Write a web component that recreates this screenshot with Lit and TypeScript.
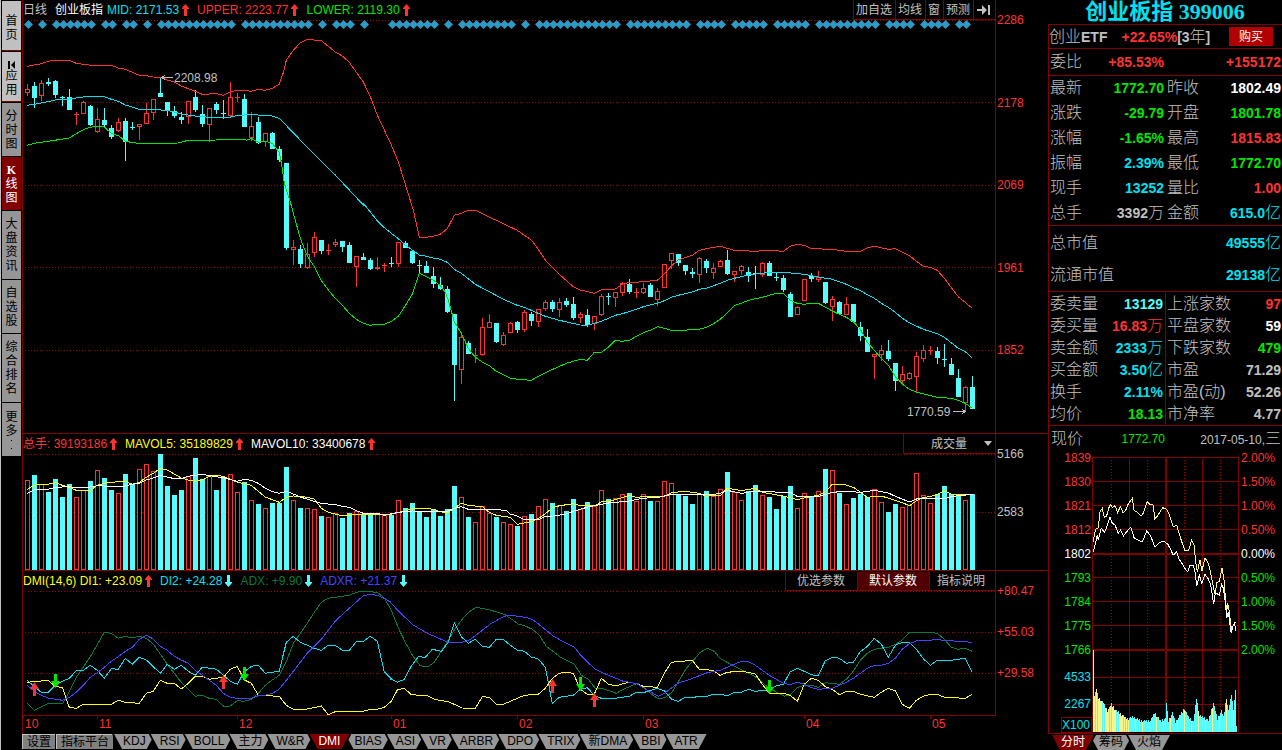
import { LitElement, html, svg, css, nothing } from "lit";
import { customElement, property, state } from "lit/decorators.js";
import { classMap } from "lit/directives/class-map.js";

/* ---------- market data ---------- */

// One entry per trading day: direction, high, body top, body bottom, low (chart units).
const DAYS = `r84,89,93,96 c82,86,98,108 r80,83,96,101 c78,82,84,86 c80,81,95,98 c96,97,98,106 c89,97,110,110
r112,114,115,125 r101,102,114,114 c105,106,125,126 r108,119,132,133 c108,120,125,127 c125,128,137,139 r118,122,131,132
c118,121,142,161 c122,127,128,130 r124,124,127,140 r103,113,124,124 r99,99,113,120 c78,93,97,97 c102,102,111,116
c106,111,116,118 c112,117,120,124 r101,101,117,124 c90,97,110,112 c105,114,124,127 r108,108,125,142 c102,104,110,114
c100,113,114,119 r82,97,116,118 r93,97,98,102 c94,99,127,127 r112,126,138,141 c117,122,143,144 r133,133,142,147
c132,133,149,149 c146,149,160,162 c163,163,248,250 r240,247,250,265 c245,249,264,268 r243,254,268,269 r232,237,253,257
c240,240,251,254 r244,250,251,255 r239,242,245,247 c241,241,247,252 c242,245,263,263 r256,256,267,287 c253,257,260,260
c258,260,269,270 r257,267,269,270 r263,265,266,272 c257,263,264,267 r242,242,264,267 c241,243,248,248 c250,251,263,264
c260,265,266,273 c261,266,273,273 c267,276,284,288 c277,285,289,290 c286,289,312,313 c314,314,365,401 r332,337,370,384
c341,343,354,354 r348,355,356,363 r318,327,355,356 r314,322,328,328 c323,323,342,343 r332,335,345,346 r322,323,333,333
c321,322,330,333 r310,312,330,332 c312,314,321,326 r309,309,322,327 r300,302,309,311 c300,302,309,312 r298,302,310,317
c298,301,305,307 c297,304,318,320 r312,314,318,323 c309,315,325,327 r316,316,324,330 r294,296,315,316 c293,296,297,305
r292,292,298,307 r282,283,293,296 c279,284,292,294 r288,292,293,298 r283,288,293,294 c283,285,297,297 r288,291,300,306
r264,264,288,288 r253,253,261,269 c254,254,263,266 c265,265,271,275 c268,272,274,278 r257,258,275,283 c259,261,268,273
r263,268,273,279 r260,261,267,267 c250,260,274,275 r271,271,275,282 r265,266,271,275 c267,272,276,282 c266,273,274,289
r262,263,275,277 c261,263,276,276 c273,277,278,281 c275,278,290,292 c292,294,317,317 r306,307,315,315 r279,279,301,301
c273,276,279,282 r271,277,280,282 c282,282,303,304 r296,299,307,321 c301,302,314,314 r297,304,315,315 c304,304,322,322
c322,327,336,341 c329,337,352,352 r354,354,357,379 r345,350,355,361 c340,351,359,361 c363,363,381,391 r366,374,381,383
r372,373,379,380 r352,356,377,392 r345,350,359,362 r346,350,351,355 c347,351,358,364 c344,359,360,367 c358,364,375,375
c369,378,397,397 r386,387,403,411 c376,387,409,409`
  .split(/\s+/)
  .map((d) => ({ up: d[0] === "r", v: d.slice(1).split(",").map(Number) }));

const VOLUME_TOPS = [
  480, 475, 484, 492, 479, 497, 484, 497, 490, 481, 470, 478, 490, 493, 474, 484, 469, 464, 471, 453, 486, 495, 490, 476,
  458, 479, 476, 490, 478, 474, 492, 482, 500, 504, 508, 503, 503, 467, 500, 508, 508, 509, 516, 517, 513, 518, 513, 511,
  514, 514, 513, 515, 515, 500, 508, 503, 512, 517, 509, 516, 509, 486, 497, 517, 522, 506, 513, 517, 522, 524, 526, 516,
  514, 506, 499, 503, 505, 511, 499, 509, 502, 506, 490, 499, 498, 494, 493, 501, 494, 501, 501, 481, 483, 494, 496, 504,
  494, 491, 496, 489, 472, 492, 500, 491, 485, 495, 497, 509, 496, 486, 508, 493, 496, 491, 469, 470, 493, 504, 498, 494,
  497, 489, 502, 512, 504, 507, 505, 473, 495, 503, 494, 486, 494, 495, 500, 494,
];

const dayX = (i: number) => 27 + 7 * i;

// A block of curve samples: origin, samples per chart unit, then x,y pairs.
type Block = [number, number, number, string];
const curve = (...blocks: Block[]) =>
  blocks
    .flatMap(([ox, oy, k, pts]) =>
      pts.trim().split(/\s+/).map((p) => {
        const [x, y] = p.split(",").map(Number);
        return `${(ox + x / k).toFixed(1)},${(oy + y / k).toFixed(1)}`;
      })
    )
    .join(" ");

const UPPER = curve(
  [0, 0, 3, "82,199 103,195 124,191 145,184 166,181 208,181 229,190 250,193 292,198 334,196 355,204 376,208 418,226 439,227 460,231 481,232 502,240 523,246 544,258 586,274 607,283 649,281 670,286 691,276 712,271 733,271 754,274 775,268 796,271 817,265 838,253 850,218 859,181 880,151 901,128 922,118 964,122 1006,156 1027,168 1048,187 1090,246 1111,290 1132,345 1174,435 1195,485 1216,553 1240,630 1253,690"],
  [240, 20, 3, "538,652 559,652 580,649 601,643 622,626 643,586 664,580 685,571 706,571 748,592 769,601 832,631 874,660 895,688 916,720 958,763 1000,800 1021,810 1063,820 1084,810 1126,807 1147,793 1168,787"],
  [620, 220, 3, "28,188 49,187 112,181 133,162 154,138 175,120 217,106 238,91 259,86 301,79 343,91 406,94 448,91 490,94 511,79 532,73 553,76 574,86 637,88 679,94 721,94 742,84 763,79 805,88 826,86 868,107 910,139 931,142 952,151 973,175 1015,230 1057,265"]
);
const MID = curve(
  [0, 0, 3, "82,316 103,313 124,309 166,300 208,297 250,291 271,289 313,290 334,298 355,304 376,315 397,321 418,328 439,328 502,331 523,336 544,342 586,348 628,352 691,352 712,346 754,344 796,346 817,348 838,355 922,442 1006,525 1090,615"],
  [240, 20, 3, "370,550 412,602 433,623 475,656 496,675 517,690 538,705 559,709 580,714 601,718 622,727 643,748 664,760 706,793 748,815 790,838 832,856 853,862 874,871 916,889 958,901 1021,915 1042,916 1084,904 1126,886"],
  [620, 220, 3, "7,281 49,268 70,260 112,250 133,242 154,232 175,226 217,216 238,208 259,205 301,190 322,181 343,175 385,165 427,160 448,157 490,157 553,163 595,171 637,178 679,193 721,212 763,235 784,250 805,262 826,277 847,295 868,308 910,328 952,341 973,352 1015,385 1036,395 1057,414"]
);
const LOWER = curve(
  [0, 0, 3, "82,436 103,430 124,427 145,424 208,414 229,401 250,389 271,382 292,379 313,381 334,400 355,407 376,423 397,428 439,432 460,430 533,429 565,421 649,420 733,418 740,421 754,415 775,427 796,424 817,430 838,458 845,495 853,550 872,610"],
  [240, 20, 3, "160,580 181,655 202,708 223,740 244,782 265,810 286,835 307,856 328,880 349,898 370,910 391,916 412,913 433,913 454,904 475,889 496,857 517,822 538,760 559,770 580,780 601,797 615,815 624,838 643,905 664,940 685,985 706,1012 727,1026 748,1037 769,1054 790,1064 811,1074 832,1078 874,1081 895,1069 916,1058 979,1030 1021,1018 1042,1021 1063,997 1084,997 1105,982 1126,961"],
  [620, 220, 3, "7,364 28,361 70,338 91,331 112,320 133,325 154,331 196,331 217,328 238,328 259,322 280,311 301,298 322,278 343,257 364,250 385,241 427,232 448,226 469,220 490,220 511,241 532,250 553,253 574,250 595,250 637,273 658,283 679,292 700,305 721,328 742,367 763,391 784,415 805,435 826,470 847,492 868,508 889,516 952,532 994,535 1015,541 1036,550 1057,565"]
);
const MAVOL5 = curve(
  [0, 430, 3, "82,178 103,166 124,163 145,163 166,157 187,166 208,172 229,181 271,181 292,166 313,160 334,157 376,154 397,163 418,157 439,142 460,130 481,115 502,120 544,144 565,150 586,154 607,149 628,139 649,136 670,139 712,157 733,161 754,166 775,184 796,201 838,217 859,202 880,198 901,199 922,202 943,207 964,235 985,247 1027,257 1048,256 1090,252 1132,253 1174,253 1195,247 1216,244 1237,235 1279,235 1300,238 1321,245 1342,249 1363,235 1384,220 1405,226 1447,230 1468,247 1489,256 1530,262"],
  [510, 430, 2.904, "22,274 41,270 62,266 82,257 103,243 123,226 143,220 184,214 204,220 245,220 265,209 286,208 347,190 367,196 387,193 420,193 448,193 468,182 509,178 550,184 570,192 611,190 631,169 672,176 712,169 733,181 794,192 834,202 875,193 896,190 916,180 936,157 957,157 977,160 998,167 1018,181 1038,196 1059,192 1079,192 1140,211 1160,220 1181,205 1201,196 1221,193 1241,187 1262,176 1282,187 1343,187"]
);
const MAVOL10 = curve(
  [0, 430, 3, "82,190 103,179 145,178 166,172 208,170 229,173 271,171 292,167 334,169 376,168 397,163 418,160 439,150 460,144 481,136 502,141 523,146 544,146 565,139 607,133 649,140 670,143 712,154 733,148 754,151 775,160 796,175 817,185 838,190 859,184 880,192 901,201 943,214 964,220 1006,224 1027,229 1048,232 1069,242 1090,250 1132,250 1153,256 1195,247 1237,243 1300,244 1342,244 1363,235 1384,230 1405,238 1489,238 1520,243"],
  [510, 430, 2.904, "0,244 22,250 41,260 82,261 103,250 123,250 143,247 163,244 184,236 225,224 286,212 340,207 387,198 430,196 468,187 509,187 550,188 590,187 611,184 631,175 672,184 712,177 753,177 774,181 814,181 834,193 896,193 936,181 977,178 1018,181 1059,175 1099,183 1120,193 1160,209 1181,200 1262,200 1282,193 1343,187"]
);
const ADX = curve(
  [0, 570, 3, "82,400 103,421 145,400 187,402 200,380 229,322 271,260 313,187 334,190 355,205 376,199 397,204 418,199 439,205 460,222 502,283 544,337 586,379 607,376 628,385 649,388 670,408 691,408 712,392 733,394 754,388 775,370 796,346 817,330 838,316 859,275 880,220 901,190 922,160 943,127 964,97 985,85 1048,76 1069,67 1090,64 1132,67 1153,84 1174,121"],
  [390, 580, 3, "7,100 28,150 49,193 70,230 91,257 112,261 133,247 154,214 175,180 196,145 217,117 238,95 259,82 301,90 343,103 364,117 385,132 406,138 427,148 448,165 469,199 511,231 553,252 574,286 595,298 616,325 637,325 679,340 700,328 742,310 763,322 784,343 805,356 826,353 847,335 868,300 889,265 931,217 952,205 973,214"],
  [720, 570, 3, "0,265 43,289 106,320 148,355 193,379 211,374 232,353 253,346 274,346 295,352 316,338 358,343 379,328 400,304 421,271 442,250 463,238 505,232 526,223 547,210 568,187 631,187 652,190 673,208 694,232 715,238 736,235 757,244"]
);
const DI2 = curve(
  [0, 570, 3, "82,331 103,350 124,367 145,367 166,346 187,334 208,325 229,302 250,301 271,286 292,301 313,325 334,296 355,298 376,265 397,283 418,262 439,270 460,290 481,310 502,283 523,298 544,286 565,304 586,316 607,291 649,298 670,315 691,334 712,343 733,305 754,289 775,286 796,310 838,304 847,265 859,217 880,199 901,217 943,235 964,241 985,226 1006,226 1027,241 1048,241 1069,215 1090,214 1111,199 1132,214 1153,306 1174,326"],
  [390, 580, 3, "0,296 22,307 43,298 64,258 85,230 106,232 127,208 154,214 175,186 193,128 214,170 235,190 256,178 277,199 298,202 319,178 340,178 361,196 382,210 403,214 424,231 445,237 466,262 487,370 508,352 550,346 571,328 592,323 613,346 634,355 676,355 718,349 739,337 760,338 802,325 823,332 844,357 865,364 886,352 949,350 970,343"],
  [720, 570, 3, "0,373 22,377 43,367 64,367 85,358 106,364 148,360 169,347 190,343 211,305 232,295 253,304 274,314 295,317 316,272 340,261 358,265 379,280 400,277 421,245 442,229 463,205 484,223 505,262 526,226 547,217 568,217 589,238 610,266 631,286 652,271 694,271 736,265 757,307"]
);
const DI1 = curve(
  [0, 570, 3, "82,337 145,331 166,350 187,352 208,412 229,415 250,403 334,403 355,391 376,397 418,400 439,370 460,364 481,331 502,340 523,340 544,357 565,340 586,319 607,319 628,328 670,322 691,298 712,289 733,330 754,340 775,376 838,379 859,406 880,418 922,417 964,408 985,434 1006,425 1090,424 1111,418 1132,418 1153,412 1174,394"],
  [390, 580, 3, "22,330 43,325 64,344 112,347 133,358 175,365 217,384 256,385 277,350 298,352 319,373 340,373 382,355 403,346 445,343 466,325 487,295 508,280 529,277 550,280 571,328 592,343 613,342 634,295 655,312 676,318 697,312 718,307 739,311 760,319 802,322 823,280 844,247 907,241 928,268 970,271"],
  [720, 570, 3, "0,316 22,307 64,303 106,312 127,343 148,370 190,370 211,376 232,394 253,343 274,325 295,331 316,350 337,358 358,374 379,364 400,364 421,373 463,382 484,367 505,355 526,362 547,403 568,415 589,391 610,379 631,373 652,373 673,382 736,385 757,373"]
);
const ADXR = curve(
  [0, 570, 3, "82,346 103,364 124,376 145,384 187,391 208,382 229,367 250,346 271,322 292,308 313,292 334,274 355,260 376,244 397,232 418,208 439,196 460,207 481,229 502,241 523,259 544,270 565,280 586,301 607,316 649,346 670,370 691,382 712,385 754,385 775,377 796,376 817,370 838,357 859,331 880,304 922,250 964,208 1006,153 1048,115 1090,77 1111,73 1132,76 1153,85 1174,98"],
  [390, 580, 3, "0,65 28,96 70,135 112,160 133,169 175,187 217,187 238,180 259,165 301,132 343,109 364,106 406,112 427,118 448,134 490,168 511,180 553,201 574,228 595,248 616,268 637,278 700,304 721,307 742,312 763,325 805,349 826,338 868,307 889,302 952,278"],
  [720, 570, 3, "0,301 43,283 64,274 85,275 106,286 148,316 190,340 211,344 232,337 253,342 274,353 295,358 337,355 379,337 400,325 442,295 463,286 484,286 505,280 526,265 547,238 568,221 589,213 652,209 715,214 757,217"]
);
const INTRADAY_AVG = curve([1040, 445, 3, "160,292 163,270 167,252 175,248 180,200 187,190 193,218 200,212 206,190 211,178 217,187 225,182 233,203 241,184 249,203 257,196 263,180 277,160 282,196 290,200 303,214 310,204 322,170 330,178 340,180 344,222 352,213 368,188 380,193 388,210 400,246 410,240 415,258 425,290 434,315 446,315 455,285 462,300 467,350 472,380 480,345 486,378 495,338 505,355 512,385 520,425 526,450 530,412 538,410 546,370 552,405 557,470 560,500 563,475 568,500 575,560 580,540 587,530"]);
const INTRADAY_PRICE = curve([1040, 445, 3, "160,322 165,300 172,270 175,285 184,250 193,262 200,247 210,217 217,235 225,240 235,265 242,255 250,273 262,258 272,247 278,265 283,280 300,288 308,288 320,258 332,273 345,307 360,292 370,288 383,297 390,310 400,330 410,320 416,340 430,362 434,370 443,380 450,360 460,360 466,385 470,424 478,390 485,415 495,388 505,402 512,420 521,478 526,443 538,450 545,418 550,430 556,470 560,520 565,500 570,540 574,565 580,540 584,535 587,558"]);

// Days that carry a news marker, as inclusive index ranges.
const NEWS = [
  [0, 0], [2, 2], [4, 9], [11, 12], [14, 15], [17, 17], [19, 29], [31, 40], [42, 42], [44, 46], [48, 48], [52, 58],
  [60, 60], [62, 69], [71, 71], [73, 84], [86, 94], [96, 99], [101, 105], [107, 111], [113, 121], [123, 126], [128, 131],
  [133, 134],
].flatMap(([a, b]) => Array.from({ length: b - a + 1 }, (_, k) => a + k));

const VOLUME_ENVELOPE = "1094,695 1096,688 1098,697 1103,702 1107,710 1111,703 1114,708 1120,713 1127,718 1133,716 1140,720 1150,720 1154,712 1160,720 1165,718 1166,702 1168,720 1172,712 1175,721 1184,708 1188,716 1193,721 1196,697 1199,715 1203,716 1208,720 1213,702 1217,718 1221,710 1223,716 1226,697 1228,710 1231,693 1233,708 1235,690 1236,725"
  .split(" ")
  .map((p) => p.split(",").map(Number));

const intradayBars = () => {
  const out: { x: number; y: number; c: string }[] = [];
  for (let x = 1094; x <= 1236; x++) {
    let k = 0;
    while (k < VOLUME_ENVELOPE.length - 2 && VOLUME_ENVELOPE[k + 1][0] < x) k++;
    const [x0, y0] = VOLUME_ENVELOPE[k];
    const [x1, y1] = VOLUME_ENVELOPE[k + 1];
    const n = (x * 37) % 7;
    const warm = x < 1127 ? n !== 3 && n !== 6 : n === 2;
    out.push({ x, y: Math.round(y0 + ((y1 - y0) * (x - x0)) / (x1 - x0)) + (n % 3), c: warm ? "warm" : "cool" });
  }
  return out;
};

/* ---------- shared styles ---------- */

const base = css`
  :host {
    display: block;
    font: 12px/14px "Liberation Sans", "Noto Sans CJK SC", sans-serif;
    color: #c0c0c0;
  }
  button {
    font: inherit;
    color: inherit;
    background: none;
    border: 0;
    padding: 0;
    margin: 0;
    cursor: pointer;
  }
  svg {
    display: block;
  }
  .red { color: #ff3232; }
  .green { color: #00e600; }
  .cyan { color: #00e1f0; }
  .aqua { color: #54fcfc; }
  .white { color: #fff; }
  .yellow { color: #ff0; }
  .adx { color: #087a3d; }
  .adxr { color: #4444ff; }
  .plot { width: 100%; shape-rendering: crispEdges; overflow: hidden; }
  .grid { stroke: #a00000; stroke-dasharray: 1 2; fill: none; }
  .line { fill: none; stroke: currentColor; }
`;

/* ---------- slanted tab strip ---------- */

@customElement("tab-strip")
class TabStrip extends LitElement {
  @property({ attribute: false }) tabs: string[] = [];
  @property() active = "";

  static styles = [
    base,
    css`
      :host { display: flex; }
      .tab {
        height: 15px;
        margin-right: -8px;
        padding: 0 2px;
        background: #000;
        clip-path: polygon(0 0, 100% 0, calc(100% - 8px) 100%, 8px 100%);
      }
      .face {
        display: block;
        padding: 0 9px;
        line-height: 15px;
        height: 15px;
        color: #000;
        background: #969696;
        clip-path: polygon(0 0, 100% 0, calc(100% - 8px) 100%, 8px 100%);
      }
      .on { position: relative; z-index: 1; }
      .on .face { color: #fff; background: #800000; }
    `,
  ];

  render() {
    return this.tabs.map(
      (t) => html`<button class=${classMap({ tab: true, on: t === this.active })} @click=${() => (this.active = t)}>
        <span class="face">${t}</span>
      </button>`
    );
  }
}

/* ---------- vertical navigation ---------- */

@customElement("side-nav")
class SideNav extends LitElement {
  @state() private active = "kline";

  static styles = [
    base,
    css`
      :host {
        padding-left: 1px;
        border-left: 1px solid #c0c0c0;
        background: #000;
      }
      nav { display: grid; gap: 1px; padding-top: 1px; }
      .item {
        display: flex;
        flex-direction: column;
        align-items: center;
        justify-content: center;
        width: 19px;
        color: #000;
        background: #969696;
      }
      .word { width: 12px; line-height: 14px; word-break: break-all; }
      .word b { font-family: "Liberation Serif", serif; }
      .light { padding-top: 4px; background: #c0c0c0; border-bottom: 1px solid #800000; }
      .two { height: 50px; }
      .three { height: 53px; }
      .four { height: 68px; }
      .on { background: #800000; color: #fff; }
    `,
  ];

  private item(id: string, size: string, content: unknown, light = false) {
    return html`<button
      class=${classMap({ item: true, [size]: true, light, on: id === this.active })}
      @click=${() => (this.active = id)}
    >${content}</button>`;
  }

  render() {
    const word = (w: unknown) => html`<span class="word">${w}</span>`;
    return html`<nav>
      ${this.item("home", "two", word("首页"), true)}
      ${this.item("apps", "two", html`
        <svg width="8" height="8" viewBox="0 0 8 8"><path d="M0 0h2v8H0zM7 0v8L3 4z" fill="#000" /></svg>${word("应用")}`, true)}
      ${this.item("minute", "three", word("分时图"))}
      ${this.item("kline", "three", word(html`<b>K</b>线图`))}
      ${this.item("news", "four", word("大盘资讯"))}
      ${this.item("watch", "three", word("自选股"))}
      ${this.item("rank", "four", word("综合排名"))}
      ${this.item("more", "three", html`${word("更多")}
        <svg width="2" height="12" viewBox="0 0 2 12"><path d="M0 2h1v1H0zM0 10h1v1H0z" fill="#000" /></svg>`)}
    </nav>`;
  }
}

/* ---------- three stacked daily charts ---------- */

@customElement("kline-board")
class KlineBoard extends LitElement {
  @state() private preset = "默认参数";

  static styles = [
    base,
    css`
      :host { border-left: 1px solid #800000; min-width: 0; }
      .pane { display: grid; grid-template-columns: minmax(0, 1fr) 52px; }
      .pane + .pane { border-top: 1px solid #800000; }
      .main { border-right: 1px solid #800000; min-width: 0; }
      .head { display: flex; align-items: center; height: 20px; white-space: nowrap; }
      .legend { display: flex; align-items: center; gap: 4px; flex: 1; }
      .legend svg { margin: 0 4px 0 -1px; }
      .period { margin-right: 4px; }
      .tools { display: flex; }
      .tools button { border: 1px solid #800000; border-width: 0 0 1px 1px; height: 20px; padding: 0 3px 0 2px; }
      .price { height: 413px; }
      .volume { height: 116px; }
      .dmi { height: 124px; }
      .axis { display: flex; flex-direction: column; justify-content: space-between; padding: 13px 0 0 1px; margin: 0; list-style: none; }
      .axis-price { height: 344px; }
      .axis-volume { height: 72px; }
      .axis-dmi { height: 96px; }
      .pick {
        display: flex;
        align-items: center;
        width: 91px;
        height: 19px;
        border: 1px solid #800000;
        border-width: 0 0 1px 1px;
      }
      .pick select {
        appearance: none;
        width: 80px;
        padding: 0 0 0 27px;
        border: 0;
        font: inherit;
        color: inherit;
        background: transparent;
      }
      .presets { display: flex; }
      .presets button { height: 19px; padding: 0 12px 0 11px; border: 1px solid #800000; border-width: 0 0 1px 1px; }
      .presets button:last-child { padding: 0 10px 0 7px; }
      .presets .on { color: #fff; background: #500000; }
      .dates {
        display: grid;
        grid-template-columns: 74fr 140fr 154fr 126fr 126fr 161fr 126fr 66fr;
        margin-right: 52px;
        border-top: 1px solid #800000;
        height: 18px;
      }
      .dates span { background: linear-gradient(#800000, #800000) 0 0 / 1px 3px no-repeat; padding: 1px 0 0 2px; }
      .hollow { fill: #000; stroke: #ff3232; }
      .up { fill: #ff3232; }
      .down { fill: #54fcfc; }
      .news { fill: #2e9ac6; shape-rendering: auto; }
      .note { fill: #c0c0c0; font-size: 12px; }
      .note-line { stroke: #c0c0c0; fill: none; }
      .buy { fill: #ff3232; shape-rendering: auto; }
      .sell { fill: #00e600; shape-rendering: auto; }
    `,
  ];

  private arrow(up: boolean) {
    return svg`<svg class=${up ? "red" : "aqua"} width="7" height="12" viewBox="0 0 7 12" fill="currentColor">
      <path d=${up ? "M3.500 0 7 4V5H5V12H2V5H0V4z" : "M3.500 12 7 8V7H5V0H2V7H0V8z"} /></svg>`;
  }

  private candle(d: { up: boolean; v: number[] }, i: number) {
    const [high, top, bottom, low] = d.v;
    const x = dayX(i);
    const cls = d.up ? "up" : "down";
    const h = Math.max(1, bottom - top);
    const wick = svg`<rect class=${cls} x=${x} y=${high} width="1" height=${low - high} />`;
    const body =
      d.up && h > 2
        ? svg`<rect class="hollow" x=${x - 1.5} y=${top + 0.5} width="4" height=${h - 1} />`
        : svg`<rect class=${cls} x=${x - 2} y=${top} width="5" height=${h} />`;
    return svg`${wick}${body}`;
  }

  private volumeBar(y: number, i: number) {
    const x = dayX(i);
    return DAYS[i].up
      ? svg`<rect class="hollow" x=${x - 1.5} y=${y + 0.5} width="4" height=${569 - y} />`
      : svg`<rect class="down" x=${x - 2} y=${y} width="5" height=${570 - y} />`;
  }

  private rule(y: number) {
    return svg`<path class="grid" d="M25 ${y + 0.5}H995" />`;
  }

  render() {
    const signal = (up: boolean, x: number, y: number) =>
      svg`<path class=${up ? "buy" : "sell"} d=${
        up ? `M${x + 0.5} ${y}l4.500 7h-3v7h-3v-7h-3z` : `M${x + 0.5} ${y + 14}l-4.500-7h3v-7h3v7h3z`
      } />`;
    return html`
      <section class="pane">
        <div class="main">
          <div class="head">
            <div class="legend">
              <span class="period">日线</span><span class="white">创业板指</span>
              <span class="cyan">MID: 2171.53</span>${this.arrow(true)}
              <span class="red">UPPER: 2223.77</span>${this.arrow(true)}
              <span class="green">LOWER: 2119.30</span>${this.arrow(true)}
            </div>
            <div class="tools">
              <button>加自选</button><button>均线</button><button>窗</button><button>预测</button>
              <button aria-label="展开">
                <svg width="16" height="12" viewBox="0 0 16 12" fill="#c0c0c0"><path d="M1 5h5V1l5 5-5 5V7H1zM12 1h2v10h-2z" /></svg>
              </button>
            </div>
          </div>
          <svg class="plot price" viewBox="23 20 972 413" preserveAspectRatio="none">
            ${[20, 102, 185, 267, 350].map((y) => this.rule(y))}
            ${NEWS.map((i) => svg`<path class="news" d="M${dayX(i) + 1.5} 20l4.500 4.500-4.500 4.500-4.500-4.500z" />`)}
            ${DAYS.map((d, i) => this.candle(d, i))}
            <polyline class="line red" points=${UPPER} />
            <polyline class="line cyan" points=${MID} />
            <polyline class="line green" points=${LOWER} />
            <path class="note-line" d="M161 77.500h12M165 75l-3 2.500 3 2.500" />
            <text class="note" x="174" y="82">2208.98</text>
            <path class="note-line" d="M953 411.500h12M962 409l3 2.500-3 2.500" />
            <text class="note" x="907" y="416">1770.59</text>
          </svg>
        </div>
        <ul class="axis axis-price red">
          <li>2286</li><li>2178</li><li>2069</li><li>1961</li><li>1852</li>
        </ul>
      </section>

      <section class="pane">
        <div class="main">
          <div class="head">
            <div class="legend">
              <span class="red">总手: 39193186</span>${this.arrow(true)}
              <span class="yellow">MAVOL5: 35189829</span>${this.arrow(true)}
              <span class="white">MAVOL10: 33400678</span>${this.arrow(true)}
            </div>
            <label class="pick">
              <select aria-label="指标"><option>成交量</option></select>
              <svg width="8" height="5" viewBox="0 0 8 5"><path d="M0 0h8L4 5z" fill="#c0c0c0" /></svg>
            </label>
          </div>
          <svg class="plot volume" viewBox="23 454 972 116" preserveAspectRatio="none">
            ${this.rule(454)}${this.rule(512)}
            ${VOLUME_TOPS.map((y, i) => this.volumeBar(y, i))}
            <polyline class="line yellow" points=${MAVOL5} />
            <polyline class="line white" points=${MAVOL10} />
          </svg>
        </div>
        <ul class="axis axis-volume"><li>5166</li><li>2583</li></ul>
      </section>

      <section class="pane">
        <div class="main">
          <div class="head">
            <div class="legend">
              <span class="yellow">DMI(14,6) DI1: +23.09</span>${this.arrow(true)}
              <span class="cyan">DI2: +24.28</span>${this.arrow(false)}
              <span class="adx">ADX: +9.90</span>${this.arrow(false)}
              <span class="adxr">ADXR: +21.37</span>${this.arrow(false)}
            </div>
            <div class="presets">
              ${["优选参数", "默认参数", "指标说明"].map(
                (p) => html`<button class=${classMap({ on: p === this.preset })} @click=${() => (this.preset = p)}>${p}</button>`
              )}
            </div>
          </div>
          <svg class="plot dmi" viewBox="23 591 972 124" preserveAspectRatio="none">
            ${[591, 632, 673].map((y) => this.rule(y))}
            <polyline class="line adx" points=${ADX} />
            <polyline class="line cyan" points=${DI2} />
            <polyline class="line yellow" points=${DI1} />
            <polyline class="line adxr" points=${ADXR} />
            ${signal(true, 34, 682)}${signal(false, 55, 674)}${signal(true, 223, 675)}${signal(false, 244, 667)}
            ${signal(true, 552, 679)}${signal(false, 580, 677)}${signal(true, 594, 693)}${signal(false, 769, 680)}
          </svg>
        </div>
        <ul class="axis axis-dmi red"><li>+80.47</li><li>+55.03</li><li>+29.58</li></ul>
      </section>
      <div class="dates red">
        ${["10", "11", "12", "01", "02", "03", "04", "05"].map((m) => html`<span>${m}</span>`)}
      </div>
    `;
  }
}

/* ---------- quote panel ---------- */

type Cell = [label: string, value: string, tone: string, unit?: string];

@customElement("quote-panel")
class QuotePanel extends LitElement {
  static styles = [
    base,
    css`
      :host { display: flex; flex-direction: column; }
      h1 {
        margin: 0;
        height: 24px;
        font: 700 22px/24px "Liberation Serif", "Noto Sans CJK SC", serif;
        text-align: center;
        white-space: nowrap;
      }
      .body { border: solid #800000; border-width: 1px 0 1px 1px; }
      .fund { display: flex; align-items: center; height: 23px; border-bottom: 1px solid #800000; white-space: nowrap; }
      .fund .gain { margin-left: 14px; }
      .fund button { width: 44px; height: 19px; margin-left: auto; margin-right: 9px; color: #fff; background: #b00000; }
      .cjk { font-size: 16px; font-weight: 300; }
      .num { font-size: 14px; font-weight: 700; }
      table { width: 100%; border-collapse: separate; border-spacing: 0; table-layout: fixed; border-bottom: 1px solid #800000; }
      th, td { padding: 0; white-space: nowrap; line-height: 20px; }
      th { font-size: 16px; font-weight: 300; text-align: left; padding-left: 1px; color: #c0c0c0; }
      td { font-size: 14px; font-weight: 700; text-align: right; padding-right: 1px; }
      td .unit { font-size: 16px; font-weight: 300; }
      td.left { padding-right: 2px; }
      .ratio tr { height: 26px; }
      .tall tr { height: 25px; }
      .tall tr:first-child { height: 24px; }
      .cap, .dense { padding-top: 1px; }
      .cap tr { height: 32px; }
      .dense tr { height: 22px; }
      .dense td.left { border-right: 1px solid #800000; }
      .now { display: grid; grid-template-columns: 50px 66px 1fr; align-items: center; height: 26px; text-align: right; line-height: 20px; }
      .now .label { text-align: left; padding-left: 2px; }
      .now .day { padding-right: 1px; }
      .intraday { display: grid; grid-template-columns: 43px minmax(0, 1fr) 43px; margin-top: -1px; }
      .intraday ul { display: flex; flex-direction: column; gap: 10px; margin: 0; padding: 0; list-style: none; }
      .prices { text-align: right; }
      .prices li { padding-right: 1px; }
      .prices .cyan { padding-top: 3px; }
      .prices .scale { align-self: flex-end; margin-top: -4px; padding-top: 0; border: 1px solid #800000; }
      .percents li { padding-left: 2px; }
      .chart { padding-top: 6px; }
      .chart svg { height: 275px; }
      .frame { stroke: #800000; fill: none; }
      .bold { stroke: #800000; stroke-width: 2; }
      .warm { fill: #f5f58c; }
      .cool { fill: #54fcfc; }
      .pale { fill: #fff; }
      .avg { color: #f5f58c; }
      tab-strip { margin: 1px 0 0 2px; }
    `,
  ];

  private rows(cells: Cell[][]) {
    const value = (c: Cell, left: boolean) =>
      html`<td class=${`${c[2]}${left ? " left" : ""}`}>${c[1]}${c[3] ? html`<span class="unit">${c[3]}</span>` : nothing}</td>`;
    return cells.map(
      (r) => html`<tr>
        <th scope="row">${r[0][0]}</th>${value(r[0], true)}
        <th scope="row">${r[1][0]}</th>${value(r[1], false)}
      </tr>`
    );
  }

  private cols() {
    return html`<colgroup><col width="50" /><col width="67" /><col width="62" /><col /></colgroup>`;
  }

  render() {
    return html`
      <h1 class="cyan">创业板指 399006</h1>
      <div class="body">
        <div class="fund">
          <span class="cjk">创业</span><span class="num">ETF</span>
          <span class="num red gain">+22.65%</span><span class="num">[3</span><span class="cjk">年</span><span class="num">]</span>
          <button>购买</button>
        </div>
        <table class="ratio">${this.cols()}
          <tbody>
            <tr><th scope="row">委比</th><td class="red left">+85.53%</td><td class="red" colspan="2">+155172</td></tr>
          </tbody>
        </table>
        <table class="tall">${this.cols()}
          <tbody>${this.rows([
            [["最新", "1772.70", "green"], ["昨收", "1802.49", "white"]],
            [["涨跌", "-29.79", "green"], ["开盘", "1801.78", "green"]],
            [["涨幅", "-1.65%", "green"], ["最高", "1815.83", "red"]],
            [["振幅", "2.39%", "cyan"], ["最低", "1772.70", "green"]],
            [["现手", "13252", "cyan"], ["量比", "1.00", "red"]],
            [["总手", "3392", "", "万"], ["金额", "615.0", "cyan", "亿"]],
          ])}</tbody>
        </table>
        <table class="cap">
          <tbody>
            <tr><th scope="row">总市值</th><td class="cyan">49555<span class="unit">亿</span></td></tr>
            <tr><th scope="row">流通市值</th><td class="cyan">29138<span class="unit">亿</span></td></tr>
          </tbody>
        </table>
        <table class="dense">${this.cols()}
          <tbody>${this.rows([
            [["委卖量", "13129", "aqua"], ["上涨家数", "97", "red"]],
            [["委买量", "16.83", "red", "万"], ["平盘家数", "59", "white"]],
            [["卖金额", "2333", "cyan", "万"], ["下跌家数", "479", "green"]],
            [["买金额", "3.50", "cyan", "亿"], ["市盈", "71.29", ""]],
            [["换手", "2.11%", "cyan"], ["市盈(动)", "52.26", ""]],
            [["均价", "18.13", "green"], ["市净率", "4.77", ""]],
          ])}</tbody>
        </table>
        <div class="now">
          <span class="cjk label">现价</span><span class="green">1772.70</span>
          <span class="day">2017-05-10,<span class="cjk">三</span></span>
        </div>
        <div class="intraday">
          <ul class="prices">
            ${["1839", "1830", "1821", "1812"].map((p) => html`<li class="red">${p}</li>`)}
            <li class="white">1802</li>
            ${["1793", "1784", "1775", "1766"].map((p) => html`<li class="green">${p}</li>`)}
            <li class="cyan">4533</li><li class="cyan">2267</li><li class="cyan scale">X100</li>
          </ul>
          <div class="chart">
            <svg class="plot" viewBox="1092 457 147 275" preserveAspectRatio="none">
              <path class="frame" d="M1092.500 732V457.500H1238.500V732M1092 481.500h146M1092 505.500h146M1092 529.500h146M1092 577.500h146M1092 601.500h146M1092 625.500h146M1092 677.500h146M1092 704.500h146M1129.500 457v275M1202.500 457v275" />
              <path class="bold" d="M1092 554h146M1092 650h146M1166 457v275" />
              <path class="grid" d="M1111.500 457v275M1147.500 457v275M1184.500 457v275M1220.500 457v275" />
              ${intradayBars().map((b) => svg`<rect class=${b.c} x=${b.x} y=${b.y} width="1" height=${732 - b.y} />`)}
              <rect class="pale" x="1093" y="650" width="1" height="82" />
              <polyline class="line avg" points=${INTRADAY_AVG} />
              <polyline class="line white" points=${INTRADAY_PRICE} />
            </svg>
          </div>
          <ul class="percents">
            ${["2.00%", "1.50%", "1.00%", "0.50%"].map((p) => html`<li class="red">${p}</li>`)}
            <li class="white">0.00%</li>
            ${["0.50%", "1.00%", "1.50%", "2.00%"].map((p) => html`<li class="green">${p}</li>`)}
          </ul>
        </div>
      </div>
      <tab-strip .tabs=${["分时", "筹码", "火焰"]} active="分时"></tab-strip>
    `;
  }
}

/* ---------- page ---------- */

@customElement("app-root")
class AppRoot extends LitElement {
  static styles = [
    base,
    css`
      :host {
        display: grid;
        grid-template-columns: 22px minmax(0, 1fr) 234px;
        min-height: 100vh;
        background: #000;
      }
      main { min-width: 0; }
      .footer { display: flex; white-space: nowrap; }
      .box {
        height: 15px;
        margin-right: 1px;
        padding: 0 4px;
        line-height: 14px;
        color: #000;
        background: #808080;
        border: 1px solid #c0c0c0;
        border-width: 1px 0 0 1px;
      }
      .footer tab-strip { margin-left: -2px; }
    `,
  ];

  render() {
    return html`
      <side-nav></side-nav>
      <main>
        <kline-board></kline-board>
        <div class="footer">
          <button class="box">设置</button><button class="box">指标平台</button>
          <tab-strip
            .tabs=${["KDJ", "RSI", "BOLL", "主力", "W&R", "DMI", "BIAS", "ASI", "VR", "ARBR", "DPO", "TRIX", "新DMA", "BBI", "ATR"]}
            active="DMI"
          ></tab-strip>
        </div>
      </main>
      <quote-panel></quote-panel>
    `;
  }
}
